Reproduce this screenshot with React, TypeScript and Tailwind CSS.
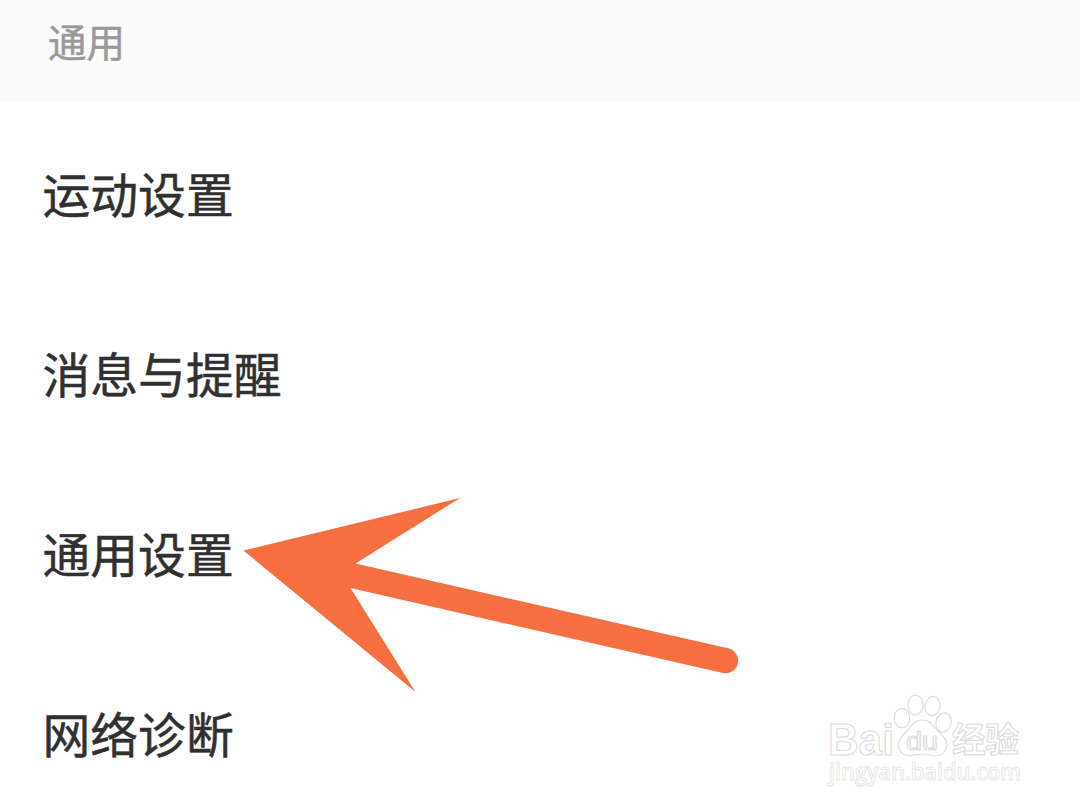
const menuItems = ['运动设置', '消息与提醒', '通用设置', '网络诊断'];

const Arrow = () => (
  <svg
    className="absolute left-[240px] top-[490px] h-[210px] w-[504px]"
    viewBox="240 490 504 210"
    fill="#f56f41"
    aria-hidden="true"
  >
    <path d="M243.5 550.5 460 498 355.5 563.5 728 648.3A12.5 12.5 0 0 1 723 673L350.5 588 415.5 692Z" />
  </svg>
);

const Watermark = () => (
  <svg
    className="absolute left-[820px] top-[685px] h-[120px] w-[220px]"
    viewBox="0 0 220 120"
    fill="#ffffff"
    stroke="#dcdcdc"
    strokeWidth="1.2"
    strokeLinejoin="round"
    fontFamily="'Liberation Sans', 'Noto Sans CJK SC', sans-serif"
  >
    <text x="8" y="69.5" fontSize="44" fontWeight="700" textLength="66" lengthAdjust="spacingAndGlyphs">
      Bai
    </text>
    <ellipse cx="82" cy="33" rx="7.7" ry="9.7" />
    <ellipse cx="95.5" cy="20" rx="7.5" ry="10" />
    <ellipse cx="112.5" cy="21" rx="7.5" ry="9.7" transform="rotate(10 112.5 21)" />
    <ellipse cx="123.5" cy="37.5" rx="7.5" ry="9.7" transform="rotate(15 123.5 37.5)" />
    <path d="M102 35C94 35 91 41 87 46C82 51 78 55 78.5 61C79 67 84 71 90 70.5C95 70 98 69 103 69C108 69 111 71 116 71C123 70.5 127 65 127 60C127 54 122 50 118 46C113 41 110 35 102 35Z" />
    <text x="86" y="65" fontSize="26" fontWeight="400" textLength="32" lengthAdjust="spacingAndGlyphs">
      du
    </text>
    <text x="132" y="67" fontSize="34" fontWeight="700" textLength="67" lengthAdjust="spacingAndGlyphs">
      经验
    </text>
    <text
      x="9"
      y="95"
      fontSize="23"
      fontWeight="600"
      stroke="#e6e6e6"
      strokeWidth="1"
      textLength="192"
      lengthAdjust="spacingAndGlyphs"
      fontFamily="'Open Sans', sans-serif"
    >
      jingyan.baidu.com
    </text>
  </svg>
);

export default function App() {
  return (
    <div className="relative h-[810px] w-[1080px] overflow-hidden bg-[#fefefe] font-['Noto_Sans_CJK_SC',sans-serif]">
      <header className="flex h-[102px] items-start bg-[#fafafa] pl-12 pt-[11px]">
        <h2 className="text-[38.5px] leading-[58px] text-[#999999] [-webkit-text-stroke:0.5px_#999999]">通用</h2>
      </header>
      <ul className="pt-px">
        {menuItems.map((item) => (
          <li
            key={item}
            className="flex h-[180px] items-center pl-[42.5px] text-[47.8px] leading-none text-[#303030] [-webkit-text-stroke:0.5px_#303030]"
          >
            {item}
          </li>
        ))}
      </ul>
      <Arrow />
      <Watermark />
    </div>
  );
}
